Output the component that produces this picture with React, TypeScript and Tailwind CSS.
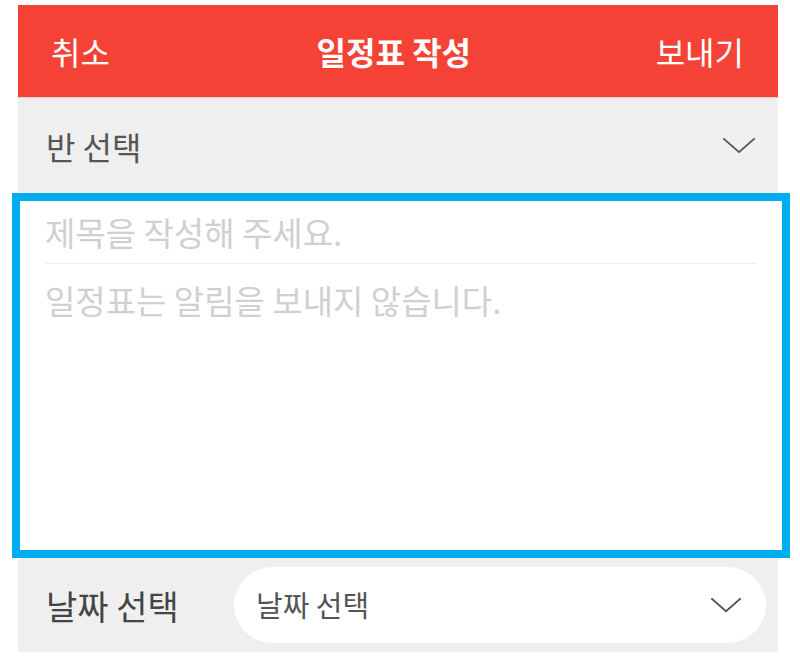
import React from "react";

const font = { fontFamily: '"Noto Sans CJK KR", "Noto Sans", sans-serif' };

function Chevron({ className }: { className?: string }) {
  return (
    <svg viewBox="0 0 36 18" className={className} fill="none" stroke="#555" strokeWidth="2" strokeLinecap="round" strokeLinejoin="round">
      <path d="M2 2 L18 16 L34 2" />
    </svg>
  );
}

export default function App() {
  return (
    <div className="min-h-[660px] w-[800px] bg-white pt-[5px]" style={font}>
      <div className="ml-[18px] w-[760px] flex flex-col">
        <div className="h-[92px] bg-[#f44336] flex items-center justify-between pl-[33px] pr-[34px] text-white text-[32px]">
          <span>취소</span>
          <span className="font-bold ml-[22px]">일정표 작성</span>
          <span>보내기</span>
        </div>
        <div className="h-[96px] bg-[#efefef] border-t border-[#f3d0cc] flex items-center justify-between pl-[28px] pr-[22px]">
          <span className="text-[32px] text-[#555]">반 선택</span>
          <Chevron className="w-[34px] h-[17px]" />
        </div>
        <div className="ml-[-6px] mr-[-12px] h-[365px] border-[8px] border-[#00aeef] bg-white px-[25px] flex flex-col">
          <div className="h-[63px] border-b border-[#eeeeee] flex items-center text-[33px] text-[#d0d0d0] pt-[2px]">제목을 작성해 주세요.</div>
          <div className="pt-[12px] text-[33px] text-[#d0d0d0]">일정표는 알림을 보내지 않습니다.</div>
        </div>
        <div className="h-[94px] bg-[#efefef] flex items-center pl-[28px] pr-[12px]">
          <span className="text-[34px] text-[#444] w-[188px]">날짜 선택</span>
          <div className="flex-1 h-[76px] bg-white rounded-full flex items-center justify-between pl-[22px] pr-[24px]">
            <span className="text-[29px] text-[#555]">날짜 선택</span>
            <Chevron className="w-[32px] h-[16px]" />
          </div>
        </div>
      </div>
    </div>
  );
}
